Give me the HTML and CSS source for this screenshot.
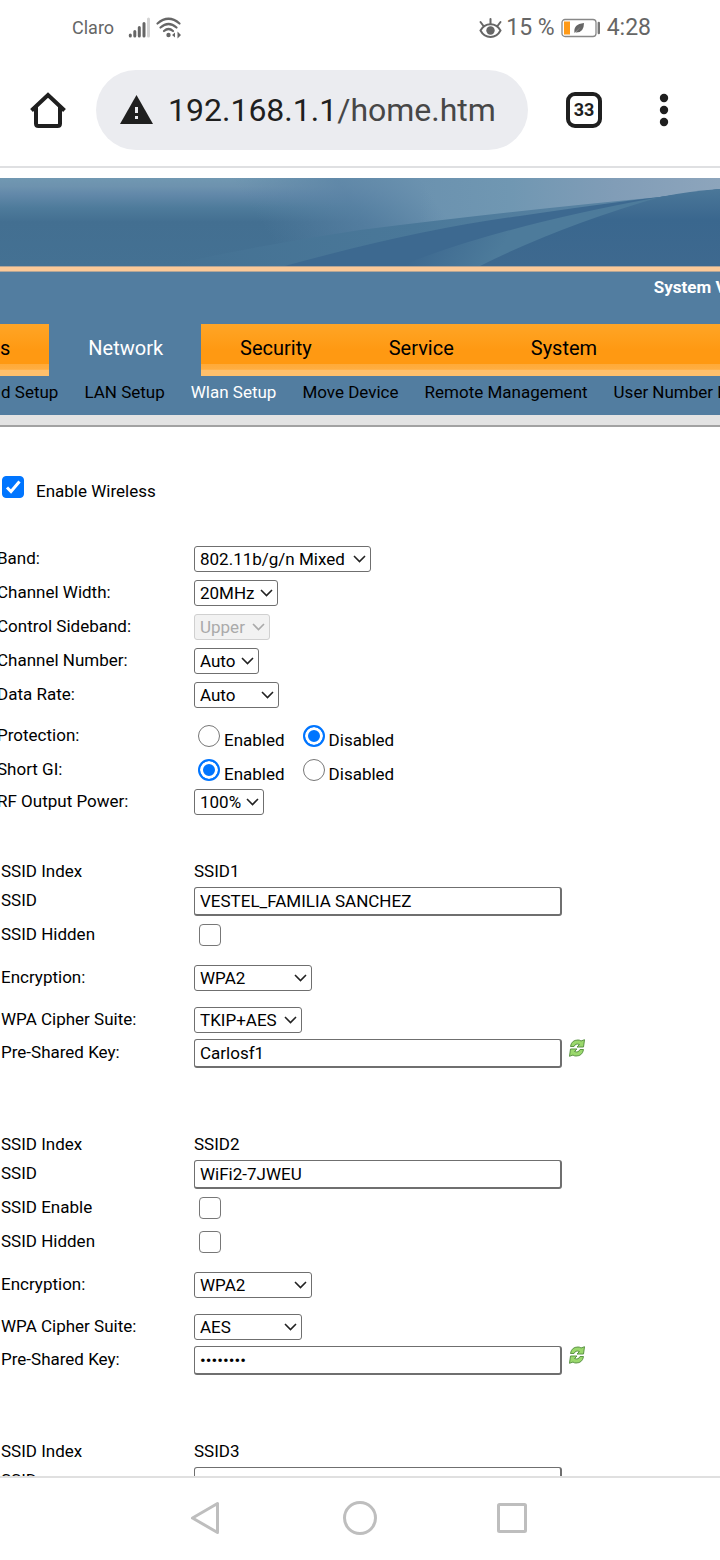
FILE: index.html
```html
<!DOCTYPE html>
<html lang="en">
<head>
<meta charset="utf-8">
<meta name="viewport" content="width=device-width, initial-scale=1">
<title>Wlan Setup</title>
<link rel="stylesheet" href="styles.css">
</head>
<body>
<div class="status-bar">
  <span class="carrier">Claro</span>
  <svg class="signal" width="22" height="22" viewBox="0 0 22 22" aria-hidden="true">
    <g stroke-width="3" stroke-linecap="round" stroke="#666"><path d="M2.300 18v1M6.800 14.500v4.500M11.300 10.500v8.500M16 6.500v12.500"/><path d="M20.500 2v17" stroke="#d4d4d4"/></g>
  </svg>
  <svg class="wifi" width="26" height="22" viewBox="0 0 26 22" aria-hidden="true">
    <g fill="none" stroke="#666" stroke-width="2.200" stroke-linecap="round"><path d="M1.500 6.500Q12.500-3 23.500 6.500M4.500 10.500Q12.500 3.500 20.500 10.500M8 14Q12.500 10 17 14"/></g>
    <circle cx="12.500" cy="18" r="2.200" fill="#666"/><path d="M16 18l3-2.500v5zM25 18l-3.500-3.500v7z" fill="#666"/>
  </svg>
  <span class="status-spacer"></span>
  <svg class="eye" width="23" height="20" viewBox="0 0 23 20" aria-hidden="true">
    <path d="M1.500 12.500C6 4 17 4 21.500 12.500C17 21 6 21 1.500 12.500z" fill="none" stroke="#666" stroke-width="2"/><circle cx="11.500" cy="12.500" r="4.200" fill="#666"/><path d="M11.500 1v5M1.500 4l3 4M21.500 4l-3 4" stroke="#666" stroke-width="2" stroke-linecap="round"/>
  </svg>
  <span class="status-text">15 %</span>
  <svg class="battery" width="40" height="20" viewBox="0 0 40 20" aria-hidden="true">
    <rect x="1" y="1.500" width="34" height="17" rx="3" fill="#fff" stroke="#888" stroke-width="1.300"/><rect x="3" y="3.500" width="6" height="13" fill="#ff9a17"/><path d="M37.800 5v10" stroke="#777" stroke-width="2.400" stroke-linecap="round"/><path d="M13.500 15Q12 6 23 5Q23 15 14.500 14.500L20 8.500L13.500 15z" fill="#666"/>
  </svg>
  <span class="status-text">4:28</span>
</div>

<header class="browser-bar">
  <button class="icon-button home" aria-label="Home">
    <svg width="36" height="36" viewBox="0 0 36 36"><path d="M1.500 18.500L18 3L34.500 18.500M6 15v16.500Q6 34 8.500 34h19Q30 34 30 31.500V15" fill="none" stroke="#1f1f1f" stroke-width="4"/></svg>
  </button>
  <div class="address">
    <svg width="34" height="30" viewBox="0 0 34 30" aria-hidden="true"><path d="M16.500 0L33 29H0z" fill="#1f1f1f"/><path d="M15 12h3v6h-3zM15 21h3v3h-3z" fill="#ebecf0"/></svg>
    <span class="url">192.168.1.1<span class="url-path">/home.htm</span></span>
  </div>
  <button class="tabs-button" aria-label="Open tabs">33</button>
  <button class="icon-button menu" aria-label="Menu">
    <svg width="10" height="34" viewBox="0 0 10 34"><g fill="#1f1f1f"><circle cx="5" cy="5" r="4.200"/><circle cx="5" cy="17" r="4.200"/><circle cx="5" cy="29" r="4.200"/></g></svg>
  </button>
</header>

<main class="viewport">
  <svg class="banner" viewBox="0 0 720 88" preserveAspectRatio="none" aria-hidden="true">
    <defs>
      <linearGradient id="sky" x1="0" y1="0" x2="0" y2="1"><stop offset="0" stop-color="#7198b2"/><stop offset=".1" stop-color="#6d92ae"/><stop offset=".18" stop-color="#6389aa"/><stop offset=".34" stop-color="#4e7b9b"/><stop offset=".5" stop-color="#436f91"/><stop offset="1" stop-color="#447193"/></linearGradient>
      <linearGradient id="haze" gradientUnits="userSpaceOnUse" x1="290" y1="88" x2="420" y2="0"><stop offset="0" stop-color="#5a83a5" stop-opacity="0"/><stop offset=".55" stop-color="#5a83a5" stop-opacity=".7"/><stop offset="1" stop-color="#6b92af"/></linearGradient>
      <linearGradient id="glow" x1="0" y1="0" x2="1" y2="0"><stop offset="0" stop-color="#7097b2" stop-opacity="0"/><stop offset=".3" stop-color="#7097b2"/><stop offset=".65" stop-color="#819db7"/><stop offset="1" stop-color="#8da5bc"/></linearGradient>
      <linearGradient id="ray" gradientUnits="userSpaceOnUse" x1="170" y1="88" x2="660" y2="19"><stop offset="0" stop-color="#447193"/><stop offset=".5" stop-color="#4a7899"/><stop offset="1" stop-color="#5d86a5"/></linearGradient>
      <linearGradient id="ray2" gradientUnits="userSpaceOnUse" x1="430" y1="50" x2="490" y2="88"><stop offset="0" stop-color="#3d6990"/><stop offset="1" stop-color="#4d7b9b"/></linearGradient>
      <linearGradient id="deep" gradientUnits="userSpaceOnUse" x1="0" y1="11" x2="0" y2="88"><stop offset="0" stop-color="#4b7799"/><stop offset=".4" stop-color="#3a678e"/><stop offset="1" stop-color="#3e698f"/></linearGradient>
    </defs>
    <path d="M0 0H720V88H0z" fill="url(#sky)"/>
    <path d="M0 0H720V88H0z" fill="url(#haze)"/>
    <path d="M420 0H720V13L420 50z" fill="url(#glow)"/>
    <path d="M165 88Q260 67 360 52Q520 32 660 19L720 11V88z" fill="url(#ray)"/>
    <path d="M285 88Q420 51 520 38Q600 26 660 19L720 11V88z" fill="#3d6990"/>
    <path d="M400 88Q500 48 660 19L720 11V88z" fill="url(#ray2)"/>
    <path d="M480 88Q560 48 660 19Q690 13 720 11V88z" fill="url(#deep)"/>
  </svg>
  <div class="banner-line"></div>
  <div class="system-line"><span>System Version</span></div>
  <nav class="tabs">
    <a href="#" class="tab">s</a>
    <a href="#" class="tab active">Network</a>
    <a href="#" class="tab">Security</a>
    <a href="#" class="tab">Service</a>
    <a href="#" class="tab">System</a>
    <span class="tab-fill"></span>
  </nav>
  <nav class="subnav">
    <a href="#">d Setup</a>
    <a href="#">LAN Setup</a>
    <a href="#" class="current">Wlan Setup</a>
    <a href="#">Move Device</a>
    <a href="#">Remote Management</a>
    <a href="#">User Number Limit</a>
  </nav>
  <div class="shade"></div>

  <form class="settings">
    <label class="enable"><input type="checkbox" class="check" checked><span>Enable Wireless</span></label>

    <section class="radio-settings">
      <div class="row"><label for="band">Band:</label><select id="band" class="w-band"><option>802.11b/g/n Mixed</option></select></div>
      <div class="row"><label for="width">Channel Width:</label><select id="width" class="w-width"><option>20MHz</option></select></div>
      <div class="row"><label for="side">Control Sideband:</label><select id="side" class="w-side" disabled><option>Upper</option></select></div>
      <div class="row"><label for="chan">Channel Number:</label><select id="chan" class="w-chan"><option>Auto</option></select></div>
      <div class="row"><label for="rate">Data Rate:</label><select id="rate" class="w-rate"><option>Auto</option></select></div>
      <div class="radio-rows">
        <div class="row"><span>Protection:</span><div class="choices"><label><input type="radio" name="prot"><span>Enabled</span></label><label><input type="radio" name="prot" checked><span>Disabled</span></label></div></div>
        <div class="row"><span>Short GI:</span><div class="choices"><label><input type="radio" name="gi" checked><span>Enabled</span></label><label><input type="radio" name="gi"><span>Disabled</span></label></div></div>
      </div>
      <div class="row short"><label for="power">RF Output Power:</label><select id="power" class="w-power"><option>100%</option></select></div>
    </section>

    <section class="ssid">
      <div class="row line"><span>SSID Index</span><span>SSID1</span></div>
      <div class="row line"><label for="ssid1">SSID</label><input type="text" id="ssid1" value="VESTEL_FAMILIA SANCHEZ"></div>
      <div class="checks">
        <div class="row"><label for="hid1">SSID Hidden</label><input type="checkbox" class="check inset" id="hid1"></div>
      </div>
      <div class="row tall"><label for="enc1">Encryption:</label><select id="enc1" class="w-enc"><option>WPA2</option></select></div>
      <div class="row medium"><label for="cip1">WPA Cipher Suite:</label><select id="cip1" class="w-cipher"><option>TKIP+AES</option></select></div>
      <div class="row line"><label for="key1">Pre-Shared Key:</label><div class="key"><input type="text" id="key1" value="Carlosf1"><button type="button" class="refresh" aria-label="Refresh key"><svg width="16" height="18" viewBox="0 0 16 18"><g fill="#9ad86c" stroke="#5b9444" stroke-width="1"><path d="M1.500 7.500Q2.500 1 9 1Q11 1 12 2L15.500.7L14.500 8H8L10.500 5.500Q6.500 4 5 7.500z"/><path d="M14.500 10.500Q13.500 17 7 17Q5 17 4 16L.5 17.300L1.500 10H8L5.500 12.500Q9.500 14 11 10.500z"/></g></svg></button></div></div>
    </section>

    <section class="ssid">
      <div class="row line"><span>SSID Index</span><span>SSID2</span></div>
      <div class="row line"><label for="ssid2">SSID</label><input type="text" id="ssid2" value="WiFi2-7JWEU"></div>
      <div class="checks">
        <div class="row"><label for="en2">SSID Enable</label><input type="checkbox" class="check inset" id="en2"></div>
        <div class="row"><label for="hid2">SSID Hidden</label><input type="checkbox" class="check inset" id="hid2"></div>
      </div>
      <div class="row tall"><label for="enc2">Encryption:</label><select id="enc2" class="w-enc"><option>WPA2</option></select></div>
      <div class="row medium"><label for="cip2">WPA Cipher Suite:</label><select id="cip2" class="w-cipher"><option>AES</option></select></div>
      <div class="row line"><label for="key2">Pre-Shared Key:</label><div class="key"><input type="password" id="key2" value="12345678"><button type="button" class="refresh" aria-label="Refresh key"><svg width="16" height="18" viewBox="0 0 16 18"><g fill="#9ad86c" stroke="#5b9444" stroke-width="1"><path d="M1.500 7.500Q2.500 1 9 1Q11 1 12 2L15.500.7L14.500 8H8L10.500 5.500Q6.500 4 5 7.500z"/><path d="M14.500 10.500Q13.500 17 7 17Q5 17 4 16L.5 17.300L1.500 10H8L5.500 12.500Q9.500 14 11 10.500z"/></g></svg></button></div></div>
    </section>

    <section class="ssid">
      <div class="row line"><span>SSID Index</span><span>SSID3</span></div>
      <div class="row line"><label for="ssid3">SSID</label><input type="text" id="ssid3"></div>
    </section>
  </form>
</main>

<footer class="system-nav">
  <button class="icon-button" aria-label="Back"><svg width="36" height="36" viewBox="0 0 36 36"><path d="M27.500 3.500v29L2.500 18z" fill="none" stroke="#bebebe" stroke-width="3" stroke-linejoin="round"/></svg></button>
  <button class="icon-button" aria-label="Home screen"><svg width="36" height="36" viewBox="0 0 36 36"><circle cx="18" cy="18" r="15.500" fill="none" stroke="#bebebe" stroke-width="3"/></svg></button>
  <button class="icon-button" aria-label="Recent apps"><svg width="36" height="36" viewBox="0 0 36 36"><rect x="4.500" y="4.500" width="27" height="27" rx="1" fill="none" stroke="#bebebe" stroke-width="3"/></svg></button>
</footer>
</body>
</html>
```
FILE: styles.css
```css
* { box-sizing: border-box; }

body {
  margin: 0;
  height: 100vh;
  display: flex;
  flex-direction: column;
  overflow: hidden;
  background: #fff;
  color: #000;
  font-family: Roboto, "Liberation Sans", sans-serif;
  font-size: 17px;
  line-height: 20px;
}

a { color: inherit; text-decoration: none; }
svg { display: block; flex: none; }
button { border: 0; padding: 0; background: none; font: inherit; }

/* Phone status bar */
.status-bar {
  flex: none;
  display: flex;
  align-items: center;
  height: 56px;
  padding: 0 69px 0 72px;
  color: #666;
}
.carrier { font-size: 18px; }
.signal { margin-left: 14px; }
.wifi { margin-left: 6px; }
.status-spacer { flex: 1; }
.eye { margin-right: 4px; }
.status-text { font-size: 23px; }
.battery { margin: 0 6px; }

/* Browser toolbar */
.browser-bar {
  flex: none;
  display: flex;
  align-items: center;
  height: 112px;
  padding: 0 51px 2px 30px;
  border-bottom: 2px solid #dfe0e2;
}
.icon-button { display: flex; }
.address {
  flex: 1;
  display: flex;
  align-items: center;
  gap: 14px;
  height: 80px;
  margin: 0 38px 0 30px;
  padding-left: 24px;
  border-radius: 40px;
  background: #ebecf0;
}
.url { color: #1f1f1f; font-size: 32px; line-height: 40px; white-space: nowrap; }
.url-path { color: #474747; }
.tabs-button {
  width: 36px;
  height: 36px;
  margin-right: 57px;
  border: 4px solid #1f1f1f;
  border-radius: 9px;
  color: #1f1f1f;
  font-size: 18px;
  font-weight: 700;
}

/* Router page */
.viewport { flex: 1; min-height: 0; overflow: hidden; padding-top: 10px; }
.banner { width: 100%; height: 88px; }
.banner-line {
  height: 6px;
  background: #fbc998;
  border-top: 1px solid #b3a597;
  border-bottom: 1px solid #b3a597;
}
.system-line {
  display: flex;
  justify-content: flex-end;
  height: 52px;
  padding-top: 5px;
  overflow: hidden;
  background: #527da0;
  color: #fff;
  font-weight: 700;
  white-space: nowrap;
}
.system-line span { margin-right: -54px; }
.tabs { display: flex; height: 52px; background: #527da0; font-size: 20px; }
.tab, .tab-fill {
  padding: 0 38px 0 39px;
  line-height: 48px;
  background: linear-gradient(#ffa526, #ff9912 50%, #ff9912 76%, #ffaa38 77%, #ffae42 87%, #ffc06c 89%, #ffc06c);
}
.tab:first-child { padding-left: 0; padding-right: 39px; }
.tab-fill { flex: 1; }
.tab.active { background: #527da0; color: #fff; }
.subnav {
  display: flex;
  gap: 26px;
  height: 39px;
  padding-left: 1px;
  overflow: hidden;
  background: #527da0;
  line-height: 32px;
  white-space: nowrap;
}
.subnav .current { color: #fff; }
.shade { height: 12px; background: #e3e3e3; border-bottom: 2px solid #a2a2a2; }

/* Wireless form */
.settings { display: flex; flex-direction: column; gap: 40px; padding-top: 49px; }
.enable { display: flex; gap: 12px; padding-left: 2px; height: 26px; }
.enable span { padding-top: 5px; }
.row {
  display: grid;
  grid-template-columns: 193px minmax(0, 1fr);
  align-items: center;
  height: 34px;
  padding-left: 1px;
}
.row > label { padding-bottom: 2px; }
.row.line { height: 30px; }
.row.short { height: 28px; }
.row.medium { height: 36px; }
.row.tall { height: 48px; }
.radio-settings .row { grid-template-columns: 197px minmax(0, 1fr); margin-left: -4px; }
.radio-rows { padding-top: 8px; }
.radio-rows .row > span { padding-bottom: 5px; }
.ssid + .ssid { margin-top: 21px; }
.checks { padding: 2px 0; }

select, input[type="text"], input[type="password"] {
  border: 1px solid #6f6f6f;
  border-radius: 3px;
  background-color: #fff;
  color: #000;
  font: inherit;
}
select {
  appearance: none;
  height: 26px;
  padding: 0 0 0 5px;
  background-image: url("data:image/svg+xml,%3Csvg xmlns='http://www.w3.org/2000/svg' width='13' height='8'%3E%3Cpath d='M1 1l5.500 5.500L12 1' fill='none' stroke='%23222' stroke-width='1.600'/%3E%3C/svg%3E");
  background-repeat: no-repeat;
  background-position: right 4px center;
}
select:disabled {
  opacity: 1;
  color: #aaa;
  border-color: #d0d0d0;
  background-color: #f2f2f2;
  background-image: url("data:image/svg+xml,%3Csvg xmlns='http://www.w3.org/2000/svg' width='13' height='8'%3E%3Cpath d='M1 1l5.500 5.500L12 1' fill='none' stroke='%23aaa' stroke-width='1.600'/%3E%3C/svg%3E");
}
.w-band { width: 177px; }
.w-width { width: 84px; }
.w-side { width: 76px; }
.w-chan { width: 65px; }
.w-rate { width: 85px; }
.w-power { width: 70px; }
.w-enc { width: 118px; }
.w-cipher { width: 108px; }

input[type="text"], input[type="password"] {
  width: 368px;
  height: 29px;
  padding: 0 5px;
  border-width: 1px 2px 2px 1px;
}
.check, input[type="radio"] {
  appearance: none;
  flex: none;
  width: 22px;
  height: 22px;
  margin: 0;
  border: 1px solid #777;
  border-radius: 4px;
  background: #fff;
}
.check.inset { margin-left: 5px; }
.check:checked {
  border-color: #0075ff;
  background: #0075ff url("data:image/svg+xml,%3Csvg xmlns='http://www.w3.org/2000/svg' width='20' height='20'%3E%3Cpath d='M4 10.500l4 4L16.500 4.500' fill='none' stroke='%23fff' stroke-width='3'/%3E%3C/svg%3E") center no-repeat;
}
input[type="radio"] { border-radius: 50%; }
input[type="radio"]:checked {
  border: 2px solid #0075ff;
  background: #0075ff;
  box-shadow: inset 0 0 0 3px #fff;
}
.choices { display: flex; gap: 18px; padding-left: 4px; }
.choices label { display: flex; gap: 4px; }
.choices span { padding-top: 5px; }
.key { display: flex; align-items: center; gap: 7px; }
.refresh { padding-bottom: 10px; }

/* Phone navigation bar */
.system-nav {
  flex: none;
  display: flex;
  justify-content: center;
  gap: 116px;
  height: 84px;
  padding-top: 22px;
  border-top: 2px solid #e0e0e0;
}
```
